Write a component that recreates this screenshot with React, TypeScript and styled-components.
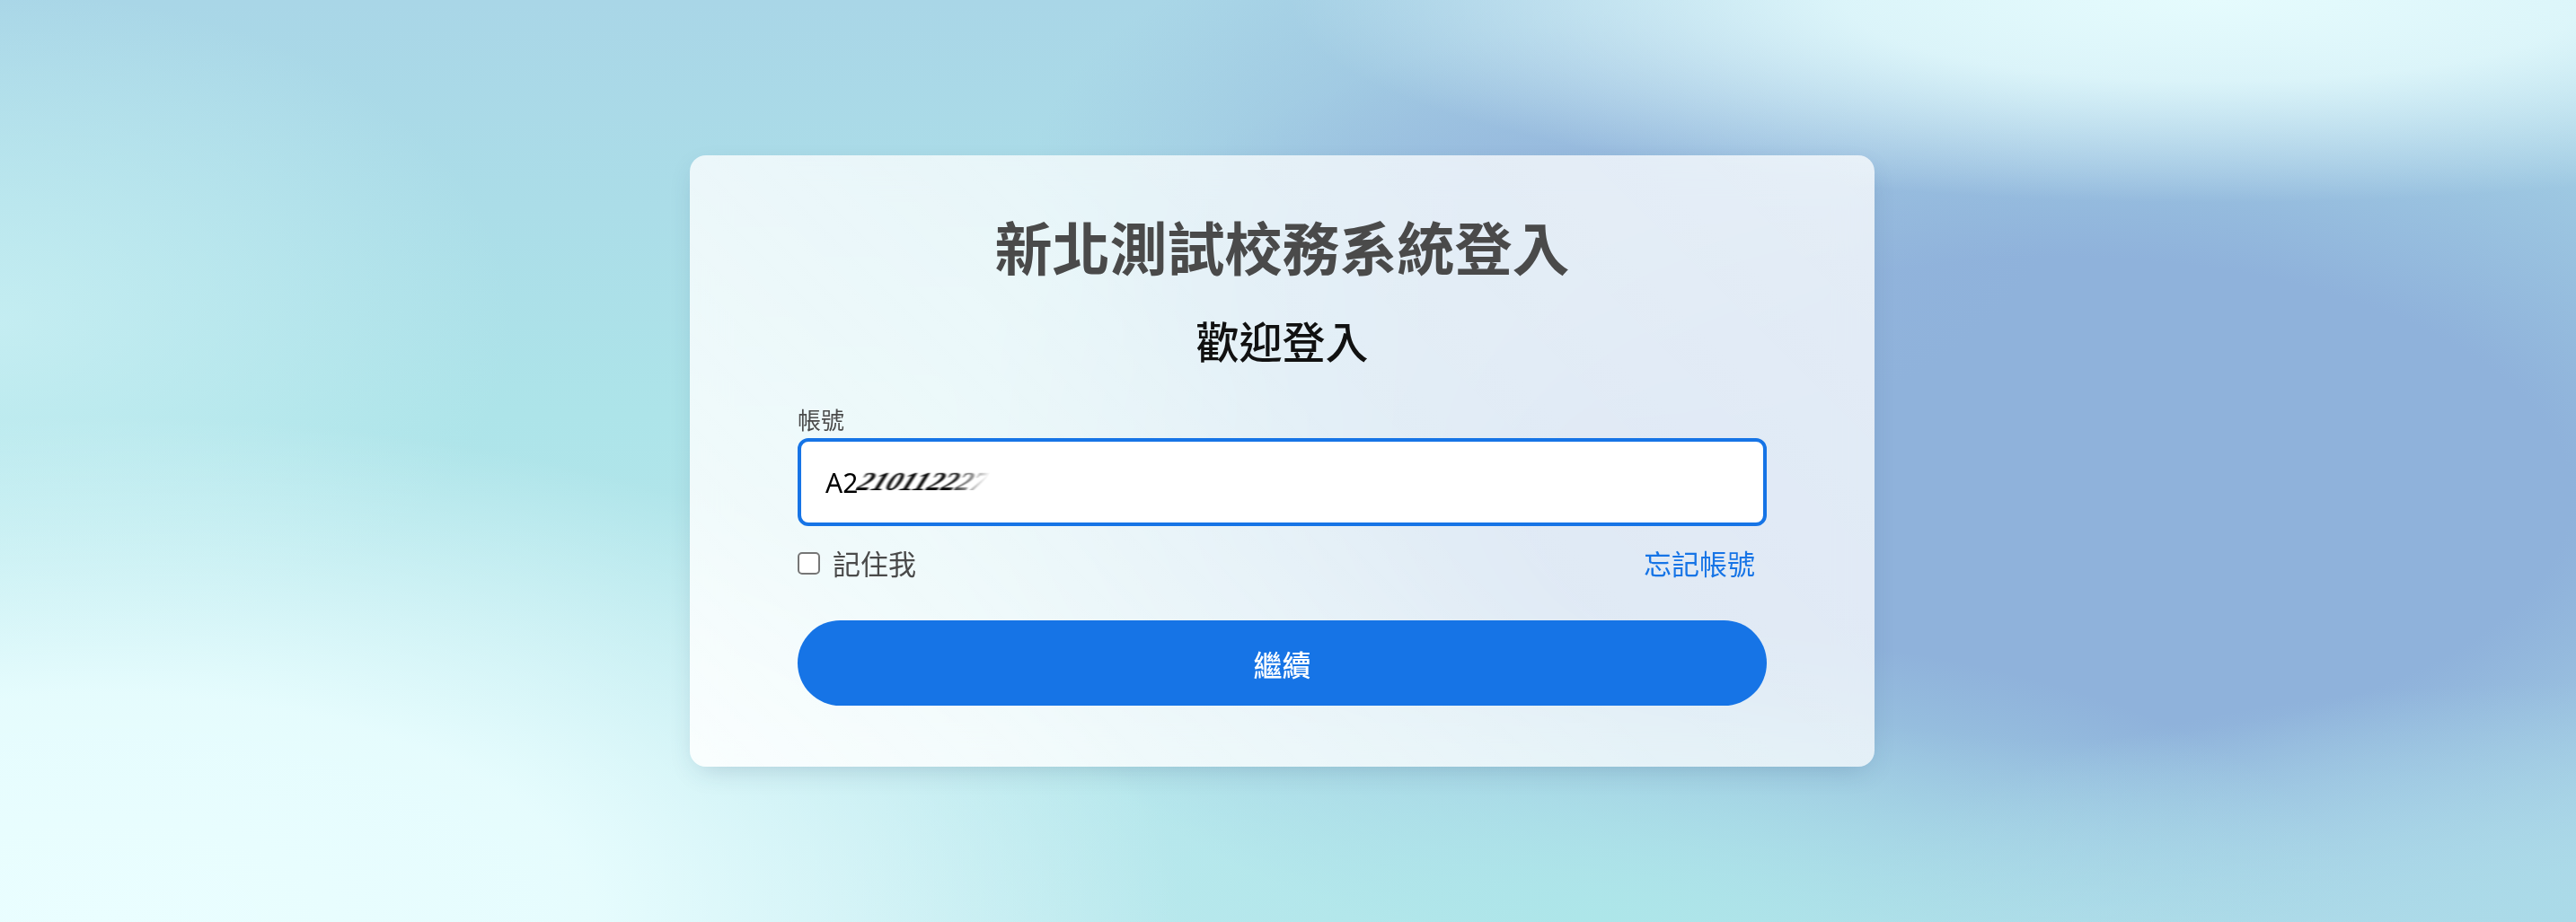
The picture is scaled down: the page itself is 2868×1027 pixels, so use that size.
import { FC } from 'react';
import styled, { createGlobalStyle } from 'styled-components';

const GlobalStyle = createGlobalStyle`
	* {
		box-sizing: border-box;
	}

	html,
	body {
		margin: 0;
		padding: 0;
		font-family: 'Noto Sans', 'Noto Sans CJK TC', sans-serif;
	}
`;

const App: FC = () => {
	return (
		<>
			<GlobalStyle />
			<Page>
				<Card>
					<Title>新北測試校務系統登入</Title>
					<Subtitle>歡迎登入</Subtitle>
					<Form onSubmit={(e) => e.preventDefault()}>
						<FieldLabel htmlFor="account">帳號</FieldLabel>
						<InputWrap>
							<AccountInput id="account" type="text" defaultValue="A2" />
							<Masked aria-hidden="true">210112227</Masked>
						</InputWrap>
						<OptionsRow>
							<Remember>
								<Checkbox type="checkbox" />
								記住我
							</Remember>
							<ForgotLink href="#">忘記帳號</ForgotLink>
						</OptionsRow>
						<SubmitButton type="submit">繼續</SubmitButton>
					</Form>
				</Card>
			</Page>
		</>
	);
};

export const Page = styled.div`
	display: flex;
	align-items: center;
	justify-content: center;
	width: 100%;
	min-height: 100vh;
	padding-right: 13px;

	background:
		radial-gradient(ellipse 36% 22% at 86% 0%, rgba(229, 251, 253, 1) 0%, rgba(229, 251, 253, 0.85) 40%, rgba(229, 251, 253, 0) 100%),
		radial-gradient(ellipse 42% 55% at 4% 100%, rgba(234, 254, 255, 1) 0%, rgba(234, 254, 255, 0.9) 45%, rgba(234, 254, 255, 0) 100%),
		radial-gradient(ellipse 20% 36% at 0% 35%, rgba(200, 239, 243, 0.85) 0%, rgba(200, 239, 243, 0) 100%),
		radial-gradient(ellipse 30% 32% at 62% 100%, rgba(173, 230, 233, 1) 0%, rgba(173, 230, 233, 0) 100%),
		radial-gradient(ellipse 28% 26% at 100% 100%, rgba(170, 218, 232, 1) 0%, rgba(170, 218, 232, 0) 100%),
		radial-gradient(ellipse 20% 30% at 60% 20%, rgba(150, 183, 221, 0.9) 0%, rgba(150, 183, 221, 0) 100%),
		radial-gradient(ellipse 44% 58% at 80% 54%, rgba(143, 178, 219, 1) 0%, rgba(143, 178, 219, 1) 45%, rgba(143, 178, 219, 0) 100%),
		linear-gradient(180deg, #a9d6e7 0%, #ade4e9 45%, #bfe9ef 100%);
`;

export const Card = styled.div`
	display: flex;
	flex-direction: column;
	width: 1319px;
	padding: 62px 120px 68px;
	border-radius: 18px;

	background: linear-gradient(45deg, rgba(255, 255, 255, 0.85) 0%, rgba(255, 255, 255, 0.72) 55%, rgba(255, 255, 255, 0.75) 100%);
	backdrop-filter: blur(20px);
	box-shadow: 0 10px 30px -10px rgba(40, 70, 110, 0.25);
`;

export const Title = styled.h1`
	margin: 0;
	font-family: 'Noto Sans CJK TC', sans-serif;
	font-size: 64px;
	font-weight: 700;
	line-height: 77px;
	text-align: center;
	color: #4a4a4a;
`;

export const Subtitle = styled.h2`
	margin: 37px 0 0;
	font-family: 'Noto Sans CJK TC', sans-serif;
	font-size: 48px;
	font-weight: 500;
	line-height: 58px;
	text-align: center;
	color: #111;
`;

export const Form = styled.form`
	display: flex;
	flex-direction: column;
	margin-top: 42px;
`;

export const FieldLabel = styled.label`
	font-family: 'Noto Sans CJK TC', sans-serif;
	font-size: 26px;
	line-height: 36px;
	color: #4a4a4a;
	margin-bottom: 3px;
`;

export const InputWrap = styled.div`
	position: relative;
`;

export const AccountInput = styled.input`
	width: 100%;
	height: 98px;
	padding: 0 27px;
	border: 4px solid #1674e6;
	border-radius: 12px;
	outline: none;

	background: #fff;
	font-family: 'Noto Sans', 'Noto Sans CJK TC', sans-serif;
	font-size: 30px;
	color: #000;
`;

export const Masked = styled.span`
	position: absolute;
	top: 50%;
	left: 68px;
	transform: translateY(-50%) skewX(-24deg) scaleY(0.85);
	font-family: 'Liberation Serif', serif;
	font-size: 33px;
	font-style: italic;
	font-weight: 700;
	letter-spacing: -0.5px;
	color: #0a0a0a;
	filter: blur(0.8px);
	pointer-events: none;
	mask-image: linear-gradient(90deg, #000 0%, #000 72%, transparent 100%);
`;

export const OptionsRow = styled.div`
	display: flex;
	align-items: center;
	justify-content: space-between;
	height: 36px;
	margin-top: 23px;
`;

export const Remember = styled.label`
	display: flex;
	align-items: center;
	gap: 14px;
	font-family: 'Noto Sans CJK TC', sans-serif;
	font-size: 31px;
	line-height: 36px;
	color: #4a4a4a;
`;

export const Checkbox = styled.input`
	appearance: none;
	width: 25px;
	height: 25px;
	margin: 0;
	border: 2px solid #767676;
	border-radius: 5px;
	background: #fff;
`;

export const ForgotLink = styled.a`
	margin-right: 13px;
	font-family: 'Noto Sans CJK TC', sans-serif;
	font-size: 31px;
	line-height: 36px;
	color: #1674e6;
	text-decoration: none;
`;

export const SubmitButton = styled.button`
	height: 95px;
	margin-top: 46px;
	border: none;
	border-radius: 48px;

	background-color: #1674e6;
	font-family: 'Noto Sans CJK TC', sans-serif;
	font-size: 32px;
	font-weight: 500;
	color: #fff;
	cursor: pointer;
`;

export default App;
